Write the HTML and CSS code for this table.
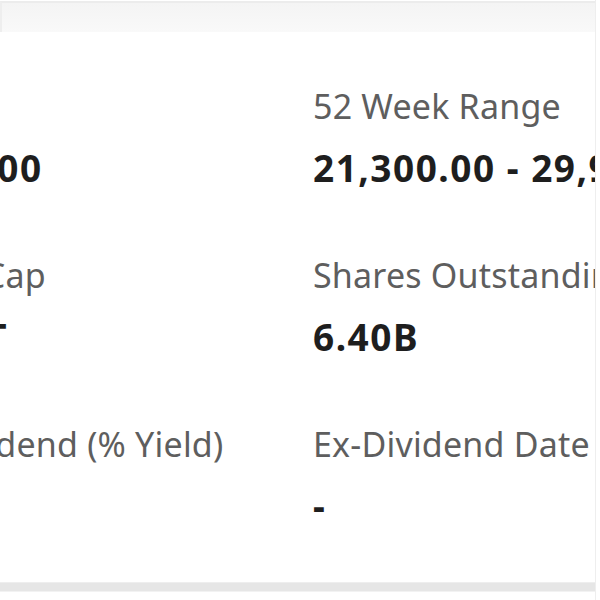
FILE: index.html
```html
<!DOCTYPE html>
<html lang="en">
<head>
<meta charset="utf-8">
<title>Stock statistics</title>
<link rel="stylesheet" href="styles.css">
</head>
<body>
<div class="page">
  <div class="top-band"></div>
  <div class="card">
    <div class="stats">
      <div class="stat">
        <div class="label">Open</div>
        <div class="value">24,900.00</div>
      </div>
      <div class="stat">
        <div class="label">52 Week Range</div>
        <div class="value">21,300.00 - 29,975.00</div>
      </div>
      <div class="stat">
        <div class="label">Market Cap</div>
        <div class="value">160.00T</div>
      </div>
      <div class="stat">
        <div class="label">Shares Outstanding</div>
        <div class="value">6.40B</div>
      </div>
      <div class="stat">
        <div class="label">Fwd Dividend (% Yield)</div>
        <div class="value">-</div>
      </div>
      <div class="stat">
        <div class="label">Ex-Dividend Date</div>
        <div class="value">-</div>
      </div>
    </div>
  </div>
  <div class="bottom-band"></div>
</div>
</body>
</html>
```

FILE: styles.css
```css
html, body {
  margin: 0;
  padding: 0;
  background: #ffffff;
}

body {
  width: 600px;
  height: 600px;
  overflow: hidden;
  font-family: "Noto Sans", "Open Sans", sans-serif;
}

.page {
  display: flex;
  flex-direction: column;
  height: 600px;
  border-right: 1px solid #eeeeee;
  margin-right: 4px;
  box-sizing: border-box;
}

.top-band {
  height: 29px;
  flex: none;
  margin-top: 1px;
  border-top: 2px solid #ececec;
  border-left: 2px solid #eeeeee;
  background: linear-gradient(#f4f4f4, #f9f9f9);
}

.card {
  flex: 1;
  overflow: hidden;
  padding-top: 51px;
}

.stats {
  display: grid;
  grid-template-columns: 413px 413px;
  column-gap: 40px;
  row-gap: 61px;
  margin-left: -140px;
}

.stat {
  display: flex;
  flex-direction: column;
  gap: 16px;
  white-space: nowrap;
}

.label {
  font-size: 34px;
  line-height: 46px;
  color: #5e5e5e;
  letter-spacing: 0.2px;
}

.value {
  font-size: 37px;
  line-height: 46px;
  font-weight: 700;
  letter-spacing: 1.5px;
  color: #1e1e1e;
}

.bottom-band {
  flex: none;
  height: 8px;
  margin-bottom: 8px;
  background: #e6e6e6;
  border-top: 1px solid #eeeeee;
  border-bottom: 1px solid #f2f2f2;
}
```
